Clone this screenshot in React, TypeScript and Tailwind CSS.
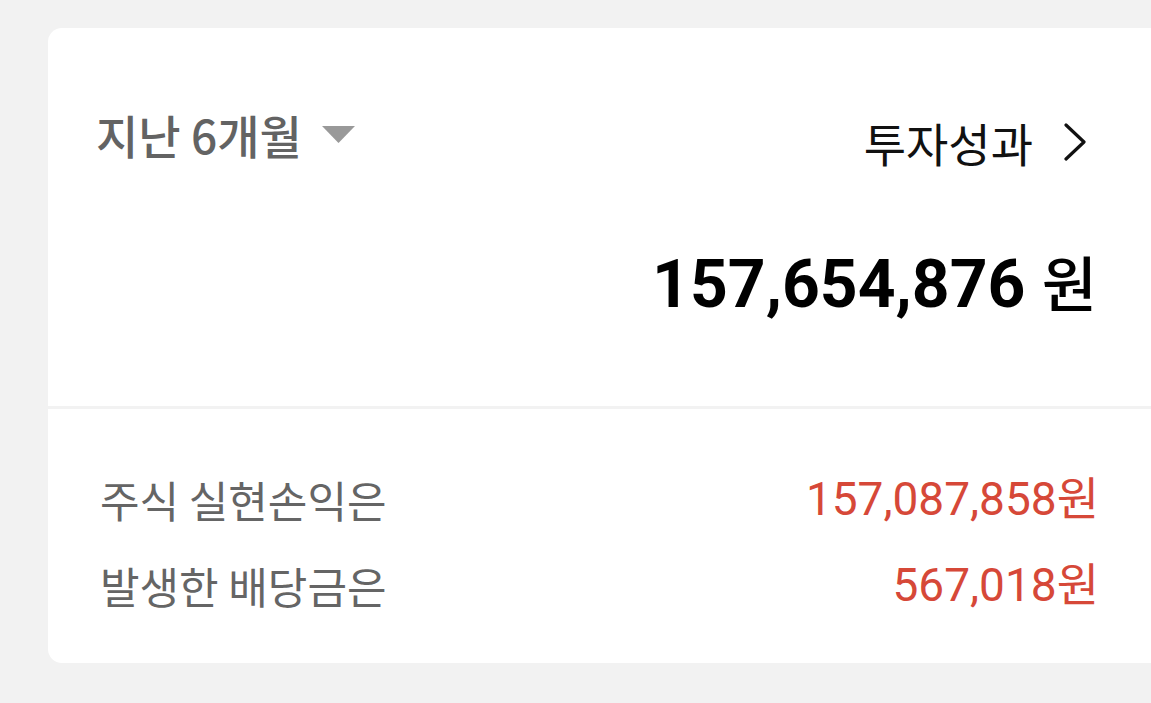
const font = { fontFamily: 'Roboto, "Noto Sans CJK KR", sans-serif' };
const kr = { fontFamily: '"Noto Sans CJK KR", sans-serif' };

function Caret() {
  return (
    <svg width="33" height="17" viewBox="0 0 33 17" className="block">
      <path d="M0 0 H33 L16.5 17 Z" fill="#999999" />
    </svg>
  );
}

function Chevron() {
  return (
    <svg width="24" height="38" viewBox="0 0 24 38" className="block">
      <path d="M3 2 L21 19 L3 36" fill="none" stroke="#111111" strokeWidth="3.2" strokeLinecap="round" strokeLinejoin="round" />
    </svg>
  );
}

function Row({ label, value }: { label: string; value: string }) {
  return (
    <div className="flex h-[56px] items-center justify-between">
      <span className="pl-[2px] text-[43px] leading-none text-[#656565]" style={kr}>
        {label}
      </span>
      <span className="text-[46px] leading-none text-[#d64838]">{value}</span>
    </div>
  );
}

export default function App() {
  return (
    <div className="min-h-[703px] w-full overflow-hidden bg-[#f2f2f2] pl-[48px] pt-[28px]" style={font}>
      <div className="mr-[-20px] rounded-[14px] bg-white">
        <section className="h-[378px] pl-[48px] pr-[74px]">
          <div className="flex items-start justify-between pt-[82px]">
            <button className="flex h-[48px] items-center gap-[20px]">
              <span className="text-[46px] font-medium leading-none text-[#636363]" style={kr}>
                지난 6개월
              </span>
              <Caret />
            </button>
            <a className="mt-[8px] flex h-[48px] items-center gap-[30px] pr-[10px]">
              <span className="text-[46px] leading-none text-[#111111]" style={kr}>
                투자성과
              </span>
              <Chevron />
            </a>
          </div>
          <div className="mt-[78px] flex h-[80px] items-center justify-end">
            <span className="text-[66px] font-bold leading-none text-black">
              157,654,876 <span style={kr} className="text-[60px] font-medium">원</span>
            </span>
          </div>
        </section>
        <div className="h-[3px] bg-[#f2f2f2]" />
        <section className="flex h-[254px] flex-col gap-[30px] pl-[50px] pr-[72px] pt-[62px]">
          <Row label="주식 실현손익은" value="157,087,858원" />
          <Row label="발생한 배당금은" value="567,018원" />
        </section>
      </div>
    </div>
  );
}
